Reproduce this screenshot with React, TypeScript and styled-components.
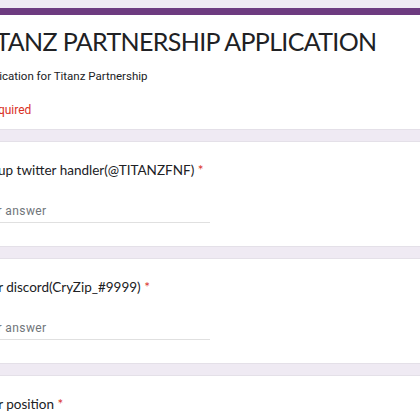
import React from "react";
import styled, { createGlobalStyle } from "styled-components";

const GlobalStyle = createGlobalStyle`
  html, body {
    margin: 0;
    padding: 0;
    background: #efeaf3;
    overflow: hidden;
  }
`;

const Page = styled.div`
  width: 480px;
  margin-left: -40px;
  padding-top: 8px;
  display: flex;
  flex-direction: column;
  gap: 11px;
`;

const Card = styled.div`
  background: #ffffff;
  border-top: 1px solid #e4e0e8;
  border-bottom: 1px solid #e4e0e8;
  padding: 0 16px;
`;

const HeaderCard = styled(Card)`
  border-top: 7px solid #6d3b80;
  padding-top: 8px;
  padding-bottom: 10px;
`;

const Title = styled.h1`
  margin: 0 0 0 -1px;
  font-family: Lato, sans-serif;
  font-weight: 400;
  font-size: 25px;
  letter-spacing: -0.65px;
  line-height: 36px;
  white-space: nowrap;
  color: #202124;
`;

const Description = styled.p`
  margin: 8px 0 0;
  font-family: Roboto, sans-serif;
  font-size: 11.5px;
  line-height: 18px;
  color: #202124;
`;

const Required = styled.p`
  margin: 16px 0 0;
  font-family: Roboto, sans-serif;
  font-size: 12px;
  line-height: 18px;
  color: #d93025;
`;

const QuestionCard = styled(Card)`
  padding-top: 17px;
  padding-bottom: 23px;
`;

const Question = styled.div`
  font-family: Lato, sans-serif;
  font-size: 13.5px;
  line-height: 22px;
  color: #202124;
`;

const Star = styled.span`
  color: #d93025;
`;

const Answer = styled.div`
  margin-top: 22px;
  width: 234px;
  padding-bottom: 3px;
  border-bottom: 1px solid #e0e0e0;
  font-family: Roboto, sans-serif;
  font-size: 12px;
  letter-spacing: 0.4px;
  line-height: 16px;
  color: #70757a;
`;

const questions = [
  "Group twitter handler(@TITANZFNF)",
  "Your discord(CryZip_#9999)",
  "Your position",
];

export default function App() {
  return (
    <>
      <GlobalStyle />
      <Page>
        <HeaderCard>
          <Title>TITANZ PARTNERSHIP APPLICATION</Title>
          <Description>Application for Titanz Partnership</Description>
          <Required>* Required</Required>
        </HeaderCard>
        {questions.map((q) => (
          <QuestionCard key={q}>
            <Question>
              {q} <Star>*</Star>
            </Question>
            <Answer>Your answer</Answer>
          </QuestionCard>
        ))}
      </Page>
    </>
  );
}
